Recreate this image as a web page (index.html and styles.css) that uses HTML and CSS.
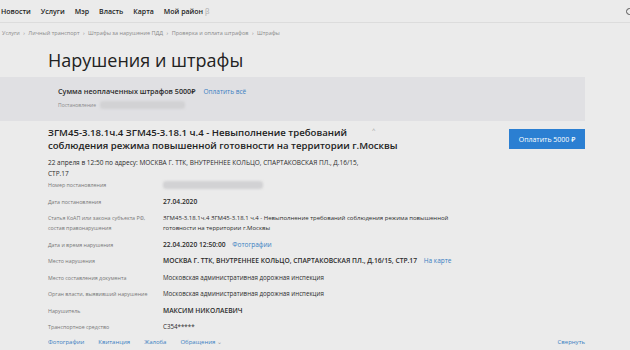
FILE: index.html
```html
<!DOCTYPE html>
<html lang="ru">
  <head>
    <meta charset="UTF-8" />
    <meta name="viewport" content="width=device-width, initial-scale=1.0" />
    <title>Нарушения и штрафы</title>
    <link rel="stylesheet" href="styles.css">
  </head>
  <body>
    <header class="topbar">
      <nav class="menu">
        <a href="#">Новости</a>
        <a href="#">Услуги</a>
        <a href="#">Мэр</a>
        <a href="#">Власть</a>
        <a href="#">Карта</a>
        <a href="#">Мой район <span class="beta">β</span></a>
      </nav>
      <span class="search"></span>
    </header>

    <div class="crumbs">
      <a href="#">Услуги</a> <span>›</span>
      <a href="#">Личный транспорт</a> <span>›</span>
      <a href="#">Штрафы за нарушение ПДД</a> <span>›</span>
      <a href="#">Проверка и оплата штрафов</a> <span>›</span>
      <a href="#">Штрафы</a>
    </div>

    <main class="page">
      <h1>Нарушения и штрафы</h1>

      <section class="summary">
        <div class="summary-line">
          <b>Сумма неоплаченных штрафов 5000₽</b>
          <a href="#" class="link">Оплатить всё</a>
        </div>
        <div class="summary-sub">
          <span>Постановление</span>
          <span class="blur blur-short"></span>
        </div>
      </section>

      <section class="fine">
        <div class="fine-head">
          <div class="fine-title">
            <h2>ЗГМ45-3.18.1ч.4 ЗГМ45-3.18.1 ч.4 - Невыполнение требований<br>соблюдения режима повышенной готовности на территории г.Москвы</h2>
            <span class="caret">^</span>
          </div>
          <button type="button" class="pay">Оплатить 5000 ₽</button>
        </div>
        <p class="fine-place">22 апреля в 12:50 по адресу: МОСКВА Г. ТТК, ВНУТРЕННЕЕ КОЛЬЦО, СПАРТАКОВСКАЯ ПЛ., Д.16/15,<br>СТР.17</p>

        <dl class="details">
          <dt>Номер постановления</dt>
          <dd><span class="blur blur-long"></span></dd>

          <dt>Дата постановления</dt>
          <dd class="strong">27.04.2020</dd>

          <dt>Статья КоАП или закона субъекта РФ, состав правонарушения</dt>
          <dd class="small">ЗГМ45-3.18.1ч.4 ЗГМ45-3.18.1 ч.4 - Невыполнение требований соблюдения режима повышенной<br>готовности на территории г.Москвы</dd>

          <dt>Дата и время нарушения</dt>
          <dd class="strong">22.04.2020 12:50:00 <a href="#" class="link">Фотографии</a></dd>

          <dt>Место нарушения</dt>
          <dd class="strong">МОСКВА Г. ТТК, ВНУТРЕННЕЕ КОЛЬЦО, СПАРТАКОВСКАЯ ПЛ., Д.16/15, СТР.17 <a href="#" class="link">На карте</a></dd>

          <dt>Место составления документа</dt>
          <dd>Московская административная дорожная инспекция</dd>

          <dt>Орган власти, выявивший нарушение</dt>
          <dd>Московская административная дорожная инспекция</dd>

          <dt>Нарушитель</dt>
          <dd class="strong">МАКСИМ НИКОЛАЕВИЧ</dd>

          <dt>Транспортное средство</dt>
          <dd>С354*****</dd>
        </dl>

        <div class="actions">
          <a href="#" class="link">Фотографии</a>
          <a href="#" class="link">Квитанция</a>
          <a href="#" class="link">Жалоба</a>
          <a href="#" class="link">Обращения <span class="chev">⌄</span></a>
          <a href="#" class="link collapse">Свернуть</a>
        </div>
      </section>
    </main>
  </body>
</html>
```

FILE: styles.css
```css
body {
  font-family: "Open Sans", "Noto Sans", sans-serif;
  background-color: #ebebeb;
  color: #2b2b2b;
  margin: 0;
  padding: 0;
  overflow: hidden;
}

a {
  color: inherit;
  text-decoration: none;
}

.topbar {
  height: 22px;
  border-bottom: 1px solid #dcdcdc;
  display: flex;
  align-items: center;
  justify-content: space-between;
}

.menu {
  display: flex;
  gap: 10px;
  margin-left: 1px;
  font-size: 7px;
  font-weight: 600;
  color: #222;
}

.beta {
  color: #aaa;
  font-weight: 400;
}

.search {
  width: 5px;
  height: 5px;
  border: 1.5px solid #555;
  border-radius: 50%;
  margin-right: -3px;
}

.crumbs {
  padding: 6px 2px;
  font-size: 5.5px;
  line-height: 8px;
  color: #8a8a8a;
}

.crumbs span {
  margin: 0 2px;
}

.page {
  margin: 0 45px 0 48px;
}

h1 {
  font-size: 18px;
  line-height: 22px;
  font-weight: 500;
  color: #222;
  margin: 6px 0 6px;
}

.summary {
  background-color: #e0e0e3;
  margin-left: -48px;
  padding: 9px 0 12px 58px;
}

.summary-line {
  display: flex;
  align-items: baseline;
  gap: 8px;
  font-size: 7.2px;
  line-height: 10px;
}

.summary-line b {
  font-weight: 600;
}

.link {
  color: #3a7fc2;
  font-size: 6.5px;
  font-weight: 400;
}

.summary-sub {
  display: flex;
  align-items: center;
  gap: 4px;
  margin-top: 4px;
  font-size: 5px;
  color: #8a8a8a;
}

.blur {
  display: inline-block;
  height: 8px;
  background-color: #d2d2d4;
  border-radius: 3px;
  filter: blur(1px);
  vertical-align: middle;
}

.blur-short {
  width: 85px;
}

.blur-long {
  width: 100px;
}

.fine-head {
  display: flex;
  justify-content: space-between;
  align-items: flex-start;
  margin-top: 5px;
}

.fine-title {
  display: flex;
  gap: 4px;
}

h2 {
  width: 320px;
  white-space: nowrap;
  font-size: 9.6px;
  font-weight: 600;
  line-height: 13px;
  margin: 0;
  color: #222;
}

.caret {
  font-size: 6px;
  color: #999;
}

.pay {
  width: 76px;
  height: 20px;
  margin-top: 3px;
  border: none;
  background-color: #2b7fd2;
  color: #fff;
  font-family: inherit;
  font-size: 7px;
  font-weight: 500;
  padding: 0;
}

.fine-place {
  font-size: 6.5px;
  line-height: 11px;
  margin: 5px 0 1px;
}

.details {
  display: grid;
  grid-template-columns: 115px 1fr;
  row-gap: 6.5px;
  margin: 0;
  font-size: 6.2px;
}

.details dt {
  color: #777;
  font-size: 5.3px;
  line-height: 10px;
}

.details dd {
  margin: 0;
  line-height: 10px;
}

.details dd.strong {
  font-size: 6.7px;
  font-weight: 600;
}

.details dd.strong .link {
  margin-left: 5px;
}

.details dd.small {
  font-size: 6px;
}

.actions {
  display: flex;
  gap: 14px;
  margin-top: 6px;
}

.actions .link {
  font-size: 6px;
}

.chev {
  color: #999;
}

.collapse {
  margin-left: auto;
}
```
